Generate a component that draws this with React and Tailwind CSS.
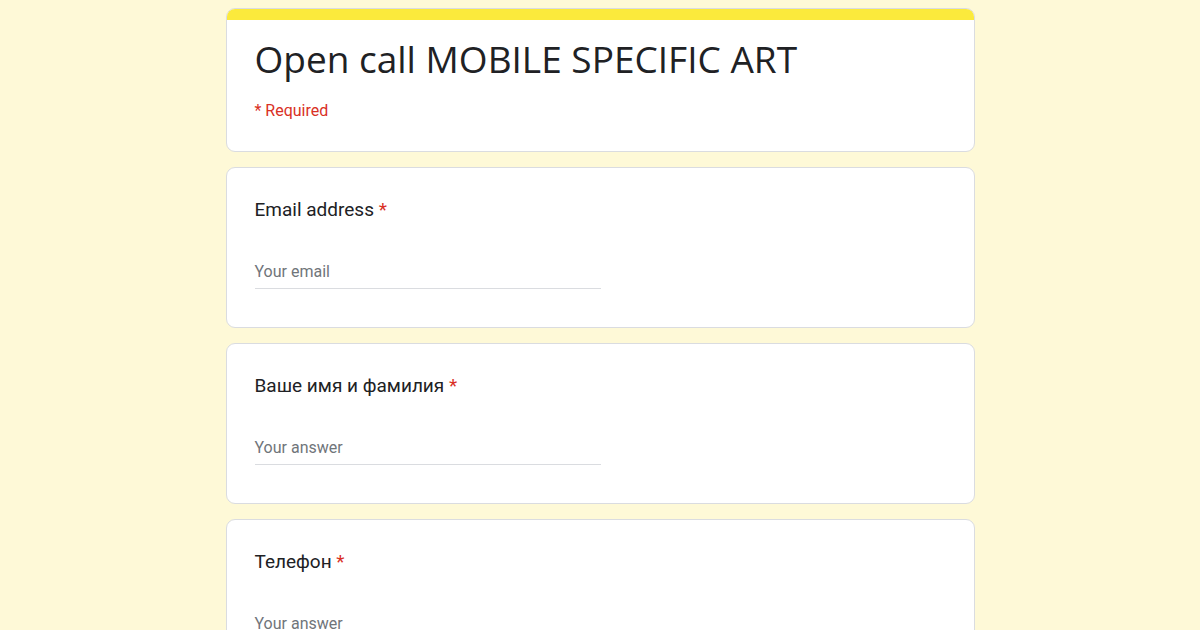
const QUESTIONS = [
  { label: 'Email address', placeholder: 'Your email' },
  { label: 'Ваше имя и фамилия', placeholder: 'Your answer' },
  { label: 'Телефон', placeholder: 'Your answer' },
]

function Question({ label, placeholder }) {
  return (
    <div className="rounded-[9px] border border-[#dadce0] bg-white px-[28px] pt-[30px] pb-[38px]">
      <div className="text-[19px] leading-[24px] text-[#202124] font-['Roboto',sans-serif]">
        {label} <span className="text-[#d93025]">*</span>
      </div>
      <div className="mt-[40px] w-[346px] border-b border-[#dadce0] pb-[6px] text-[16px] leading-[20px] text-[#70757a] font-['Roboto',sans-serif]">
        {placeholder}
      </div>
    </div>
  )
}

export default function App() {
  return (
    <div className="min-h-[630px] h-[630px] overflow-hidden bg-[#fef9d7]">
      <div className="mx-auto flex w-[749px] flex-col gap-[15px] pt-[8px]">
        <div className="overflow-hidden rounded-[9px] border border-[#dadce0] bg-white">
          <div className="h-[11px] bg-[#fbea3c]" />
          <div className="px-[28px] pt-[15px] pb-[30px]">
            <h1 className="text-[37px] leading-[48px] font-normal text-[#202124] font-['Open_Sans',sans-serif]">
              Open call MOBILE SPECIFIC ART
            </h1>
            <div className="mt-[18px] text-[16px] leading-[20px] text-[#d93025] font-['Roboto',sans-serif]">
              * Required
            </div>
          </div>
        </div>
        {QUESTIONS.map((q) => (
          <Question key={q.label} {...q} />
        ))}
      </div>
    </div>
  )
}
